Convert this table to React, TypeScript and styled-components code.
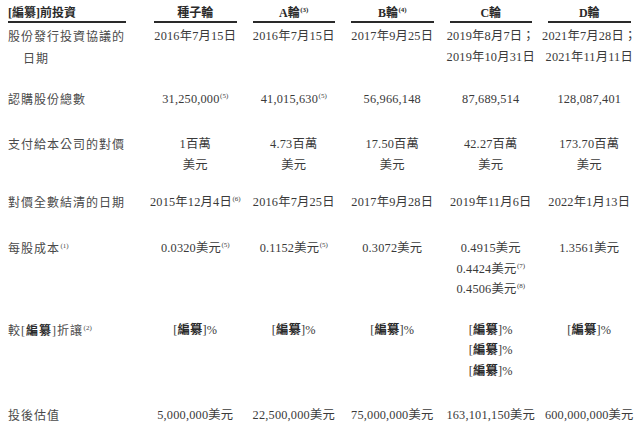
import React from 'react';
import styled, { createGlobalStyle } from 'styled-components';

const GlobalStyle = createGlobalStyle`
  html, body {
    margin: 0;
    padding: 0;
    background: #ffffff;
  }
  body {
    font-family: "Liberation Serif", "Noto Sans CJK TC", serif;
    color: #3a3a3a;
  }
`;

const Page = styled.div`
  width: 640px;
  height: 425px;
  overflow: hidden;
  box-sizing: border-box;
  padding: 0 0 0 8px;
`;

const Row = styled.div<{ $header?: boolean; $gap?: number }>`
  display: grid;
  grid-template-columns: 130px repeat(5, 82.5px);
  column-gap: 16px;
  padding-bottom: ${p => (p.$header ? '3px' : `${p.$gap ?? 21}px`)};
`;

const HeadCell = styled.div<{ $first?: boolean }>`
  margin-right: ${p => (p.$first ? '12px' : '0')};
  padding-top: 6px;
  line-height: 15px;
  font-size: 12px;
  font-weight: bold;
  color: #2a2a2a;
  text-align: ${p => (p.$first ? 'left' : 'center')};
  border-bottom: 2px solid #2a2a2a;
  white-space: nowrap;
`;

const Label = styled.div`
  font-size: 12px;
  line-height: 22px;
  letter-spacing: 1px;
  color: #4a4a4a;
  white-space: nowrap;
`;

const LabelLine = styled.div<{ $indent?: boolean }>`
  padding-left: ${p => (p.$indent ? '15px' : '0')};
`;

const Cell = styled.div`
  display: flex;
  flex-direction: column;
  align-items: center;
  font-size: 12.3px;
  line-height: 20.5px;
  letter-spacing: 0.2px;
  white-space: nowrap;
  color: #3a3a3a;
`;

const CellLine = styled.div`
  flex: none;
`;

const Sup = styled.sup`
  font-size: 7px;
  line-height: 0;
  letter-spacing: 0;
  vertical-align: 5px;
  margin-left: 0.5px;
`;

const Redact = styled.span`
  font-weight: bold;
  color: #2a2a2a;
`;

type Line = { text: React.ReactNode; note?: string };

const R = () => (
  <>
    [<Redact>編纂</Redact>]
  </>
);

const headers: { text: string; note?: string }[] = [
  { text: '種子輪' },
  { text: 'A輪', note: '(3)' },
  { text: 'B輪', note: '(4)' },
  { text: 'C輪' },
  { text: 'D輪' },
];

type RowData = { label: Line[]; cells: Line[][]; gap?: number };

const usd = (v: string, note?: string): Line[] => [{ text: `${v}美元`, note }];
const redactPct: Line = { text: <><R />%</> };

const rows: RowData[] = [
  {
    label: [{ text: '股份發行投資協議的' }, { text: '日期' }],
    cells: [
      [{ text: '2016年7月15日' }],
      [{ text: '2016年7月15日' }],
      [{ text: '2017年9月25日' }],
      [{ text: '2019年8月7日；' }, { text: '2019年10月31日' }],
      [{ text: '2021年7月28日；' }, { text: '2021年11月11日' }],
    ],
    gap: 19,
  },
  {
    label: [{ text: '認購股份總數' }],
    cells: [
      [{ text: '31,250,000', note: '(5)' }],
      [{ text: '41,015,630', note: '(5)' }],
      [{ text: '56,966,148' }],
      [{ text: '87,689,514' }],
      [{ text: '128,087,401' }],
    ],
    gap: 23,
  },
  {
    label: [{ text: '支付給本公司的對價' }],
    cells: ['1', '4.73', '17.50', '42.27', '173.70'].map(v => [
      { text: `${v}百萬` },
      { text: '美元' },
    ]),
    gap: 17,
  },
  {
    label: [{ text: '對價全數結清的日期' }],
    cells: [
      [{ text: '2015年12月4日', note: '(6)' }],
      [{ text: '2016年7月25日' }],
      [{ text: '2017年9月28日' }],
      [{ text: '2019年11月6日' }],
      [{ text: '2022年1月13日' }],
    ],
    gap: 24,
  },
  {
    label: [{ text: '每股成本', note: '(1)' }],
    cells: [
      usd('0.0320', '(5)'),
      usd('0.1152', '(5)'),
      usd('0.3072'),
      [...usd('0.4915'), ...usd('0.4424', '(7)'), ...usd('0.4506', '(8)')],
      usd('1.3561'),
    ],
    gap: 20,
  },
  {
    label: [{ text: <>較<R />折讓</>, note: '(2)' }],
    cells: [
      [redactPct],
      [redactPct],
      [redactPct],
      [redactPct, redactPct, redactPct],
      [redactPct],
    ],
    gap: 24,
  },
  {
    label: [{ text: '投後估值' }],
    cells: [
      usd('5,000,000'),
      usd('22,500,000'),
      usd('75,000,000'),
      usd('163,101,150'),
      usd('600,000,000'),
    ],
  },
];

const LineText: React.FC<{ line: Line }> = ({ line }) => (
  <>
    {line.text}
    {line.note && <Sup>{line.note}</Sup>}
  </>
);

const App: React.FC = () => (
  <Page>
    <GlobalStyle />
    <Row $header>
      <HeadCell $first>
        [編纂]前投資
      </HeadCell>
      {headers.map(h => (
        <HeadCell key={h.text}>
          {h.text}
          {h.note && <Sup>{h.note}</Sup>}
        </HeadCell>
      ))}
    </Row>

    {rows.map((row, i) => (
      <Row key={i} $gap={row.gap}>
        <Label>
          {row.label.map((l, j) => (
            <LabelLine key={j} $indent={j > 0}>
              <LineText line={l} />
            </LabelLine>
          ))}
        </Label>
        {row.cells.map((lines, j) => (
          <Cell key={j}>
            {lines.map((l, k) => (
              <CellLine key={k}>
                <LineText line={l} />
              </CellLine>
            ))}
          </Cell>
        ))}
      </Row>
    ))}
  </Page>
);

export default App;
